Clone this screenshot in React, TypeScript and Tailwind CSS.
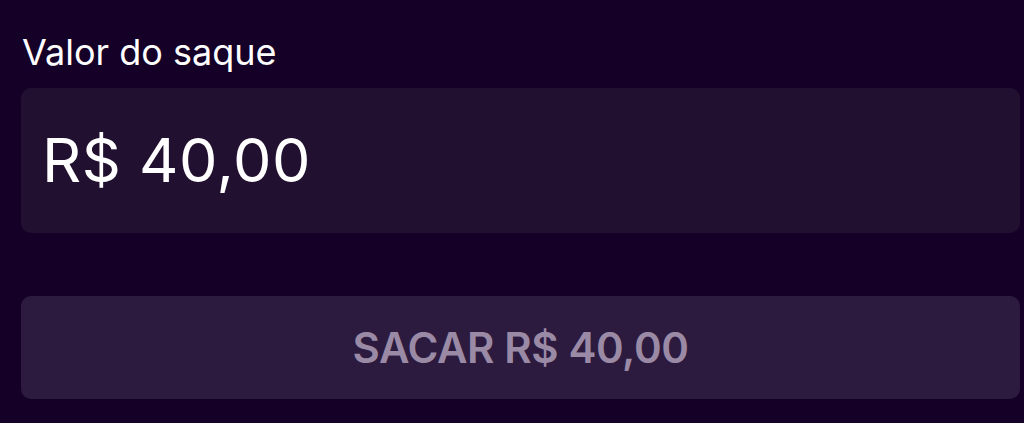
import React from "react";

export default function App() {
  const amount = "R$ 40,00";

  return (
    <div
      className="w-full h-[423px] bg-[#150127] pl-[21px] pr-[4px] pt-[30px] flex flex-col"
      style={{ fontFamily: "Inter, 'Noto Sans', sans-serif" }}
    >
      <label className="text-[36px] leading-[44px] text-white ml-[1px]">
        Valor do saque
      </label>

      <div className="mt-[14px] h-[145px] rounded-[10px] bg-[#221030] flex items-center px-[21px]">
        <span className="text-[61px] text-white leading-none tracking-[0.5px]">
          {amount}
        </span>
      </div>

      <button
        disabled
        className="mt-[63px] h-[103px] rounded-[10px] bg-[#2c1b3e] flex items-center justify-center text-[42px] font-semibold text-[#9a8aa6] tracking-[-0.4px]"
      >
        SACAR {amount}
      </button>
    </div>
  );
}
